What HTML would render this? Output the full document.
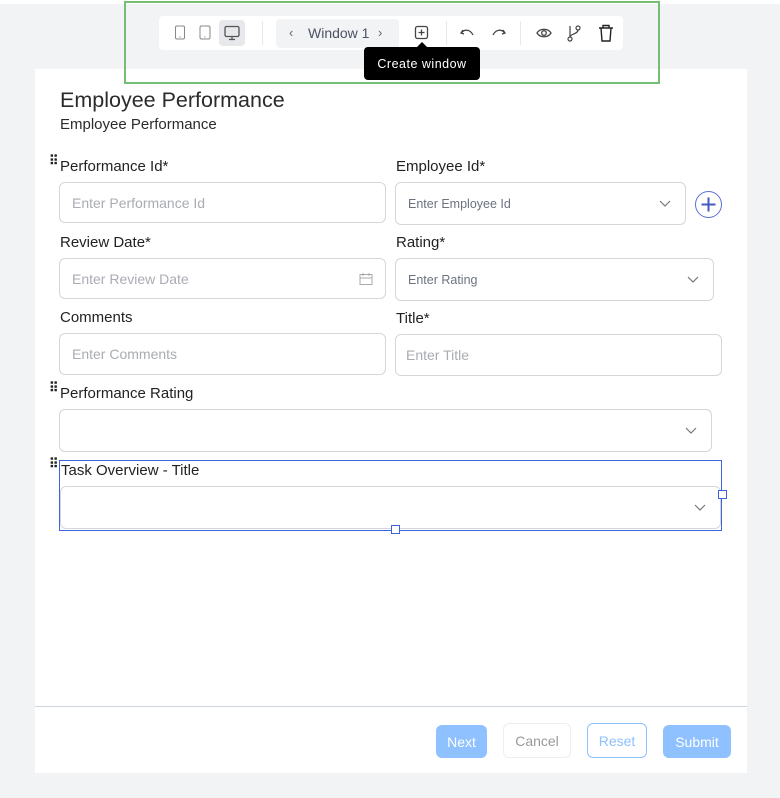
<!DOCTYPE html>
<html><head><meta charset="utf-8"><style>
*{box-sizing:border-box;margin:0;padding:0}
body{width:780px;height:798px;background:#f2f3f5;font-family:"Liberation Sans",sans-serif;position:relative;overflow:hidden}
.a{position:absolute}
.card{left:35px;top:69px;width:712px;height:704px;background:#fff}
.lbl{font-size:15px;color:#222;}
.inp{border:1px solid #d4d6dc;border-radius:6px;background:#fff;font-size:14px;color:#a9acb3;padding-left:12px;display:flex;align-items:center}
.sel{color:#6b7280;font-size:12.5px}
.chev{position:absolute;right:14px;top:50%;margin-top:-4px}
.grip{font-size:13px;font-weight:bold;color:#222;letter-spacing:-1px;line-height:8px}
.btn{border-radius:6px;font-size:14px;display:flex;align-items:center;justify-content:center}
</style></head><body>
<div class="a" style="left:0;top:0;width:780px;height:4px;background:#fff"></div>
<div class="a card"></div>
<!-- toolbar -->
<div class="a" style="left:159px;top:16px;width:464px;height:34px;background:#fff;border-radius:4px"></div>
<svg class="a" style="left:172px;top:24px" width="16" height="18"><rect x="3.5" y="2" width="9" height="13" rx="1.5" fill="none" stroke="#888" stroke-width="1"/><circle cx="8" cy="13" r=".6" fill="#888"/></svg>
<svg class="a" style="left:197px;top:24px" width="16" height="18"><rect x="3" y="2" width="10" height="13" rx="1.5" fill="none" stroke="#888" stroke-width="1"/><circle cx="8" cy="13" r=".6" fill="#888"/></svg>
<div class="a" style="left:219px;top:20px;width:26px;height:26px;background:#e6e8eb;border-radius:4px"></div>
<svg class="a" style="left:223px;top:24px" width="18" height="18"><rect x="2" y="2.5" width="14" height="10" rx="1.5" fill="none" stroke="#555" stroke-width="1.3"/><path d="M9 12.5v3M6 15.5h6" stroke="#555" stroke-width="1.3"/></svg>
<div class="a" style="left:262px;top:21px;width:1px;height:24px;background:#e3eaf3"></div>
<div class="a" style="left:276px;top:19px;width:123px;height:29px;background:#f2f3f5;border-radius:4px"></div>
<div class="a" style="left:289px;top:25px;font-size:13px;color:#666">‹</div>
<div class="a" style="left:308px;top:25px;font-size:14px;color:#4b5262">Window 1</div>
<div class="a" style="left:378px;top:25px;font-size:13px;color:#666">›</div>
<svg class="a" style="left:413px;top:24px" width="18" height="18"><rect x="2.5" y="2.5" width="12" height="12" rx="2" fill="none" stroke="#444" stroke-width="1.3"/><path d="M8.5 5.5v6M5.5 8.5h6" stroke="#444" stroke-width="1.3"/></svg>
<div class="a" style="left:446px;top:21px;width:1px;height:24px;background:#e3eaf3"></div>
<svg class="a" style="left:459px;top:25px" width="18" height="16"><path d="M4 5l-2 3 3 1M2.5 8C5 4 11 4 14 10" fill="none" stroke="#444" stroke-width="1.3"/></svg>
<svg class="a" style="left:489px;top:25px" width="18" height="16"><path d="M14 5l2 3-3 1M15.5 8C13 4 7 4 4 10" fill="none" stroke="#444" stroke-width="1.3"/></svg>
<div class="a" style="left:520px;top:21px;width:1px;height:24px;background:#e3eaf3"></div>
<svg class="a" style="left:535px;top:25px" width="18" height="16"><path d="M2 8C5 3 13 3 16 8 13 13 5 13 2 8z" fill="none" stroke="#444" stroke-width="1.3"/><circle cx="9" cy="8" r="2.3" fill="none" stroke="#444" stroke-width="1.3"/></svg>
<svg class="a" style="left:565px;top:23px" width="18" height="20"><circle cx="5" cy="16" r="2" fill="none" stroke="#444" stroke-width="1.2"/><circle cx="13" cy="5" r="2" fill="none" stroke="#444" stroke-width="1.2"/><path d="M5 3v11M13 7c0 4-8 4-8 7" fill="none" stroke="#444" stroke-width="1.2"/></svg>
<svg class="a" style="left:597px;top:23px" width="18" height="20"><path d="M2 5h14M6 5V2.5h6V5M4 5l1 13h8l1-13" fill="none" stroke="#222" stroke-width="1.4"/></svg>
<!-- tooltip -->
<div class="a" style="left:364px;top:47px;width:116px;height:33px;background:#000;border-radius:4px;color:#fff;font-size:12.5px;letter-spacing:.5px;display:flex;align-items:center;justify-content:center">Create window</div>
<div class="a" style="left:417px;top:42px;width:0;height:0;border-left:5px solid transparent;border-right:5px solid transparent;border-bottom:5px solid #000"></div>
<div class="a" style="left:124px;top:1px;width:536px;height:83px;border:2px solid #74bf74"></div>
<!-- headings -->
<div class="a" style="left:60px;top:88px;font-size:21.5px;color:#2b2b2b">Employee Performance</div>
<div class="a" style="left:60px;top:116px;font-size:15px;color:#2b2b2b">Employee Performance</div>
<!-- fields -->
<div class="a grip" style="left:49px;top:157px">⠿</div>
<div class="a lbl" style="left:60px;top:158px">Performance Id*</div>
<div class="a inp" style="left:59px;top:182px;width:327px;height:41px">Enter Performance Id</div>
<div class="a lbl" style="left:396px;top:158px">Employee Id*</div>
<div class="a inp sel" style="left:395px;top:182px;width:291px;height:43px">Enter Employee Id<svg class="chev" width="12" height="8"><path d="M1 1l5 5 5-5" fill="none" stroke="#777" stroke-width="1.2"/></svg></div>
<svg class="a" style="left:694px;top:190px" width="29" height="29"><circle cx="14.5" cy="14.5" r="13" fill="none" stroke="#5b6fd6" stroke-width="1"/><path d="M14.5 7.5v14M7.5 14.5h14" stroke="#4658c0" stroke-width="2"/></svg>
<div class="a lbl" style="left:60px;top:234px">Review Date*</div>
<div class="a inp" style="left:59px;top:258px;width:327px;height:41px">Enter Review Date<svg class="a" style="right:12px;top:13px" width="14" height="14"><rect x="1" y="2.5" width="12" height="10" fill="none" stroke="#aaa" stroke-width="1"/><path d="M1 6h12M4 1v3M10 1v3" stroke="#aaa"/></svg></div>
<div class="a lbl" style="left:396px;top:234px">Rating*</div>
<div class="a inp sel" style="left:395px;top:258px;width:319px;height:43px">Enter Rating<svg class="chev" width="12" height="8"><path d="M1 1l5 5 5-5" fill="none" stroke="#777" stroke-width="1.2"/></svg></div>
<div class="a lbl" style="left:60px;top:309px">Comments</div>
<div class="a inp" style="left:59px;top:333px;width:327px;height:42px">Enter Comments</div>
<div class="a lbl" style="left:396px;top:310px">Title*</div>
<div class="a inp" style="left:395px;top:334px;width:327px;height:42px;padding-left:10px">Enter Title</div>
<div class="a grip" style="left:49px;top:384px">⠿</div>
<div class="a lbl" style="left:60px;top:385px">Performance Rating</div>
<div class="a inp" style="left:59px;top:409px;width:653px;height:43px"><svg class="chev" width="12" height="8"><path d="M1 1l5 5 5-5" fill="none" stroke="#777" stroke-width="1.2"/></svg></div>
<div class="a grip" style="left:49px;top:460px">⠿</div>
<div class="a lbl" style="left:61px;top:462px">Task Overview - Title</div>
<div class="a inp" style="left:60px;top:486px;width:661px;height:43px"><svg class="chev" width="12" height="8"><path d="M1 1l5 5 5-5" fill="none" stroke="#777" stroke-width="1.2"/></svg></div>
<div class="a" style="left:59px;top:460px;width:663px;height:71px;border:1px solid #3d63dd"></div>
<div class="a" style="left:718px;top:490px;width:9px;height:9px;border:1px solid #3d63dd;background:#fff"></div>
<div class="a" style="left:391px;top:525px;width:9px;height:9px;border:1px solid #3d63dd;background:#fff"></div>
<!-- footer -->
<div class="a" style="left:35px;top:706px;width:712px;height:1px;background:#cfd5de"></div>
<div class="a btn" style="left:436px;top:725px;width:51px;height:33px;background:#8fc0ff;color:#fff">Next</div>
<div class="a btn" style="left:503px;top:723px;width:68px;height:35px;border:1px solid #eceef0;color:#999">Cancel</div>
<div class="a btn" style="left:587px;top:723px;width:60px;height:35px;border:1px solid #8fc0ff;color:#8fc0ff">Reset</div>
<div class="a btn" style="left:663px;top:725px;width:68px;height:33px;background:#8fc0ff;color:#fff">Submit</div>
</body></html>
